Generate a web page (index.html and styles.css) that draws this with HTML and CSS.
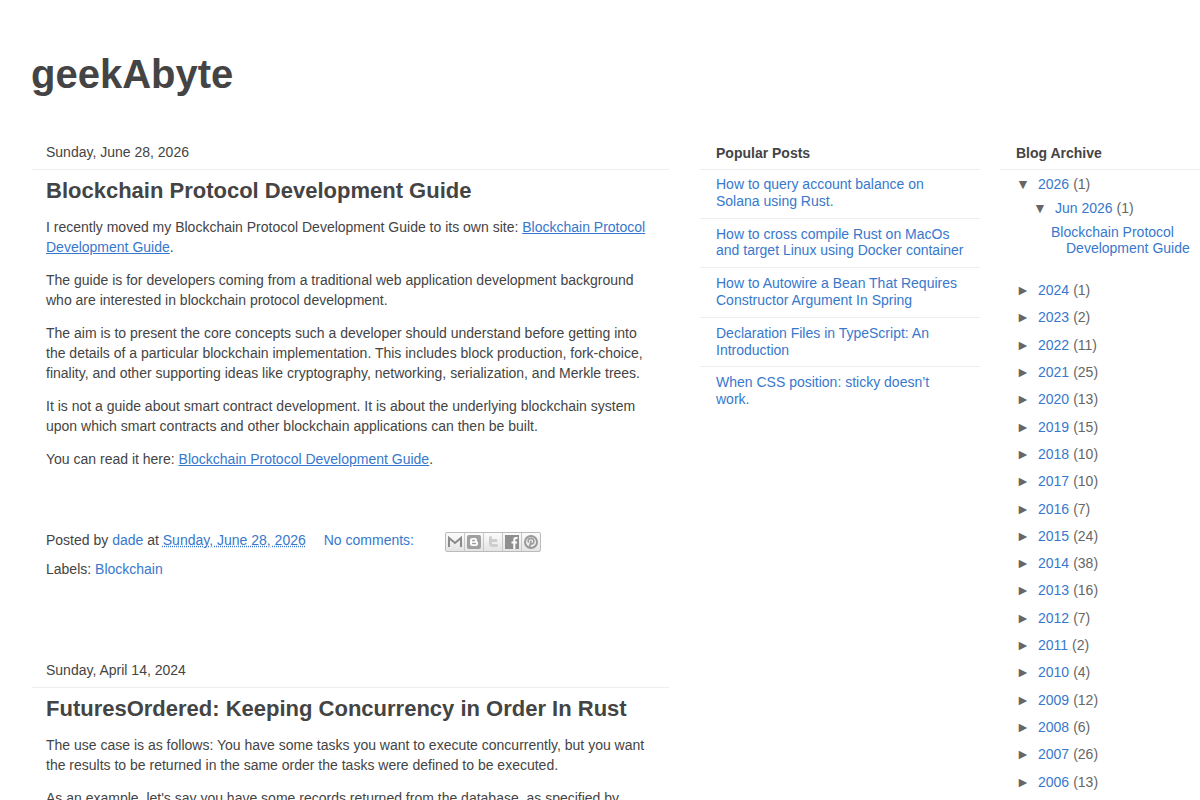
FILE: index.html
```html
<!DOCTYPE html>
<html lang="en">
<head>
<meta charset="utf-8">
<title>geekAbyte</title>
<link rel="stylesheet" href="styles.css">
</head>
<body>
<header class="site-header"><h1 class="site-title">geekAbyte</h1></header>
<div class="columns">
  <main class="posts">
    <section class="day">
      <h2 class="date">Sunday, June 28, 2026</h2>
      <article class="post">
        <h3 class="post-title">Blockchain Protocol Development Guide</h3>
        <div class="post-body">
          <p>I recently moved my Blockchain Protocol Development Guide to its own site: <a href="#">Blockchain Protocol Development Guide</a>.</p>
          <p>The guide is for developers coming from a traditional web application development background who are interested in blockchain protocol development.</p>
          <p>The aim is to present the core concepts such a developer should understand before getting into the details of a particular blockchain implementation. This includes block production, fork-choice, finality, and other supporting ideas like cryptography, networking, serialization, and Merkle trees.</p>
          <p>It is not a guide about smart contract development. It is about the underlying blockchain system upon which smart contracts and other blockchain applications can then be built.</p>
          <p>You can read it here: <a href="#">Blockchain Protocol Development Guide</a>.</p>
        </div>
        <footer class="post-footer">
          <div class="meta">
            <span>Posted by <a href="#">dade</a> at <a href="#"><abbr class="published" title="2026-06-28">Sunday, June 28, 2026</abbr></a></span>
            <a class="comments" href="#">No comments:</a>
            <div class="share">
              <a href="#" aria-label="Email This"><svg viewBox="0 0 18 18"><path d="M3 14V5l6 5 6-5v9" fill="none" stroke="#8a8a8a" stroke-width="2"/></svg></a>
              <a href="#" aria-label="BlogThis!"><svg viewBox="0 0 18 18"><rect x="2" y="2" width="14" height="14" rx="2" fill="#a0a0a0"/><path d="M7.500 5h2.500a2 2 0 0 1 2 2v1c0 .6.3.8 1 .8v1.700a2.500 2.500 0 0 1-2.500 2.500h-3A2.500 2.500 0 0 1 5 10.500v-3A2.500 2.500 0 0 1 7.500 5z" fill="#fff"/><path d="M7.500 7.500h2M7.500 10.500h3" stroke="#a0a0a0" stroke-width="1.300" stroke-linecap="round"/></svg></a>
              <a href="#" aria-label="Share to Twitter"><svg viewBox="0 0 18 18"><path d="M6.500 4.500v6a2 2 0 0 0 2 2h4M6.500 7.500h5.500" fill="none" stroke="#cdcdcd" stroke-width="3" stroke-linecap="round"/></svg></a>
              <a href="#" aria-label="Share to Facebook"><svg viewBox="0 0 18 18"><rect x="2" y="2" width="14" height="14" fill="#8f8f8f"/><path d="M14.500 5H13q-1.700 0-1.700 1.700V16M8.500 9.500h5.500" fill="none" stroke="#fff" stroke-width="2"/></svg></a>
              <a href="#" aria-label="Share to Pinterest"><svg viewBox="0 0 18 18"><circle cx="9" cy="9" r="6" fill="none" stroke="#989898" stroke-width="2"/><path d="M6.500 9.500C5.300 6.500 7 5.400 9 5.400c2.200 0 3.300 1.600 2.800 3.600-.5 2.200-2.600 2.500-3.100 1.300M9.200 7.500L7.300 15" fill="none" stroke="#989898" stroke-width="1.600"/></svg></a>
            </div>
          </div>
          <div class="labels">Labels: <a href="#">Blockchain</a></div>
        </footer>
      </article>
    </section>
    <section class="day">
      <h2 class="date">Sunday, April 14, 2024</h2>
      <article class="post">
        <h3 class="post-title">FuturesOrdered: Keeping Concurrency in Order In Rust</h3>
        <div class="post-body">
          <p>The use case is as follows: You have some tasks you want to execute concurrently, but you want the results to be returned in the same order the tasks were defined to be executed.</p>
          <p>As an example, let's say you have some records returned from the database, as specified by</p>
        </div>
      </article>
    </section>
  </main>
  <aside class="widget">
    <h2 class="widget-title">Popular Posts</h2>
    <ul class="popular">
      <li><a href="#">How to query account balance on Solana using Rust.</a></li>
      <li><a href="#">How to cross compile Rust on MacOs and target Linux using Docker container</a></li>
      <li><a href="#">How to Autowire a Bean That Requires Constructor Argument In Spring</a></li>
      <li><a href="#">Declaration Files in TypeScript: An Introduction</a></li>
      <li><a href="#">When CSS position: sticky doesn’t work.</a></li>
    </ul>
  </aside>
  <aside class="widget">
    <h2 class="widget-title">Blog Archive</h2>
    <div class="archive">
      <div class="current">
        <div class="period"><span class="toggle">▼</span><a href="#">2026</a> (1)</div>
        <div class="period month"><span class="toggle">▼</span><a href="#">Jun 2026</a> (1)</div>
        <a class="entry" href="#">Blockchain Protocol Development Guide</a>
      </div>
      <ul class="years">
        <li class="period"><span class="toggle">►</span><a href="#">2024</a> (1)</li>
        <li class="period"><span class="toggle">►</span><a href="#">2023</a> (2)</li>
        <li class="period"><span class="toggle">►</span><a href="#">2022</a> (11)</li>
        <li class="period"><span class="toggle">►</span><a href="#">2021</a> (25)</li>
        <li class="period"><span class="toggle">►</span><a href="#">2020</a> (13)</li>
        <li class="period"><span class="toggle">►</span><a href="#">2019</a> (15)</li>
        <li class="period"><span class="toggle">►</span><a href="#">2018</a> (10)</li>
        <li class="period"><span class="toggle">►</span><a href="#">2017</a> (10)</li>
        <li class="period"><span class="toggle">►</span><a href="#">2016</a> (7)</li>
        <li class="period"><span class="toggle">►</span><a href="#">2015</a> (24)</li>
        <li class="period"><span class="toggle">►</span><a href="#">2014</a> (38)</li>
        <li class="period"><span class="toggle">►</span><a href="#">2013</a> (16)</li>
        <li class="period"><span class="toggle">►</span><a href="#">2012</a> (7)</li>
        <li class="period"><span class="toggle">►</span><a href="#">2011</a> (2)</li>
        <li class="period"><span class="toggle">►</span><a href="#">2010</a> (4)</li>
        <li class="period"><span class="toggle">►</span><a href="#">2009</a> (12)</li>
        <li class="period"><span class="toggle">►</span><a href="#">2008</a> (6)</li>
        <li class="period"><span class="toggle">►</span><a href="#">2007</a> (26)</li>
        <li class="period"><span class="toggle">►</span><a href="#">2006</a> (13)</li>
      </ul>
    </div>
  </aside>
</div>
</body>
</html>
```
FILE: styles.css
```css
* { box-sizing: border-box; }
body {
  margin: 0;
  background: #fff;
  color: #444;
  font: 14px/20px "Liberation Sans", Arial, sans-serif;
}
a { color: #3778cd; text-decoration: none; }
h1, h2, h3, ul { margin: 0; padding: 0; }
ul { list-style: none; }

.site-header { padding: 50px 31px 41px; }
.site-title { font-size: 40px; line-height: 48px; }

.columns {
  display: grid;
  grid-template-columns: minmax(0, 1fr) 280px 220px;
  align-items: start;
}
.posts { padding: 0 31px 0 32px; }

.date {
  padding: 3px 14px 7px;
  border-bottom: 1px solid #eee;
  font-size: 14px;
  font-weight: normal;
}
.post { padding: 7px 14px 78px; }
.post-title { font-size: 22px; line-height: 28px; }
.post-body { padding-top: 12px; }
.post-body p { margin: 0 0 13px; }
.post-body a { text-decoration: underline; }

.post-footer { padding-top: 48px; }
.meta { display: flex; align-items: flex-start; }
.published { text-decoration: underline dotted; }
.comments { margin: 0 31px 0 18px; }
.share {
  display: flex;
  width: 96px;
  height: 20px;
  margin-top: 2px;
  border: 1px solid #bbb;
  border-radius: 2px;
  background: linear-gradient(#fbfbfb, #e4e4e4);
}
.share a { flex: 1; display: flex; align-items: center; justify-content: center; }
.share a + a { border-left: 1px solid #c8c8c8; }
.share svg { display: block; width: 18px; height: 18px; }
.labels { padding-top: 7px; }

.widget + .widget { margin-left: 20px; }
.widget-title {
  padding: 4px 16px 6px;
  border-bottom: 1px solid #eee;
  font-size: 14px;
}
.popular { line-height: 1.2; }
.popular li { padding: 7px 16px 8px; }
.popular li:first-child { padding-top: 6px; }
.popular li + li { border-top: 1px solid #eee; }

.archive { padding: 6px 0 0 16px; color: #666; line-height: 1.2; }
.period { display: flex; gap: 4px; }
.toggle { width: 18px; }
.month { margin: 7px 0 7px 17px; }
.entry { display: block; padding-left: 50px; text-indent: -15px; }
.years { display: grid; gap: .75em; margin-top: 25px; }
```
